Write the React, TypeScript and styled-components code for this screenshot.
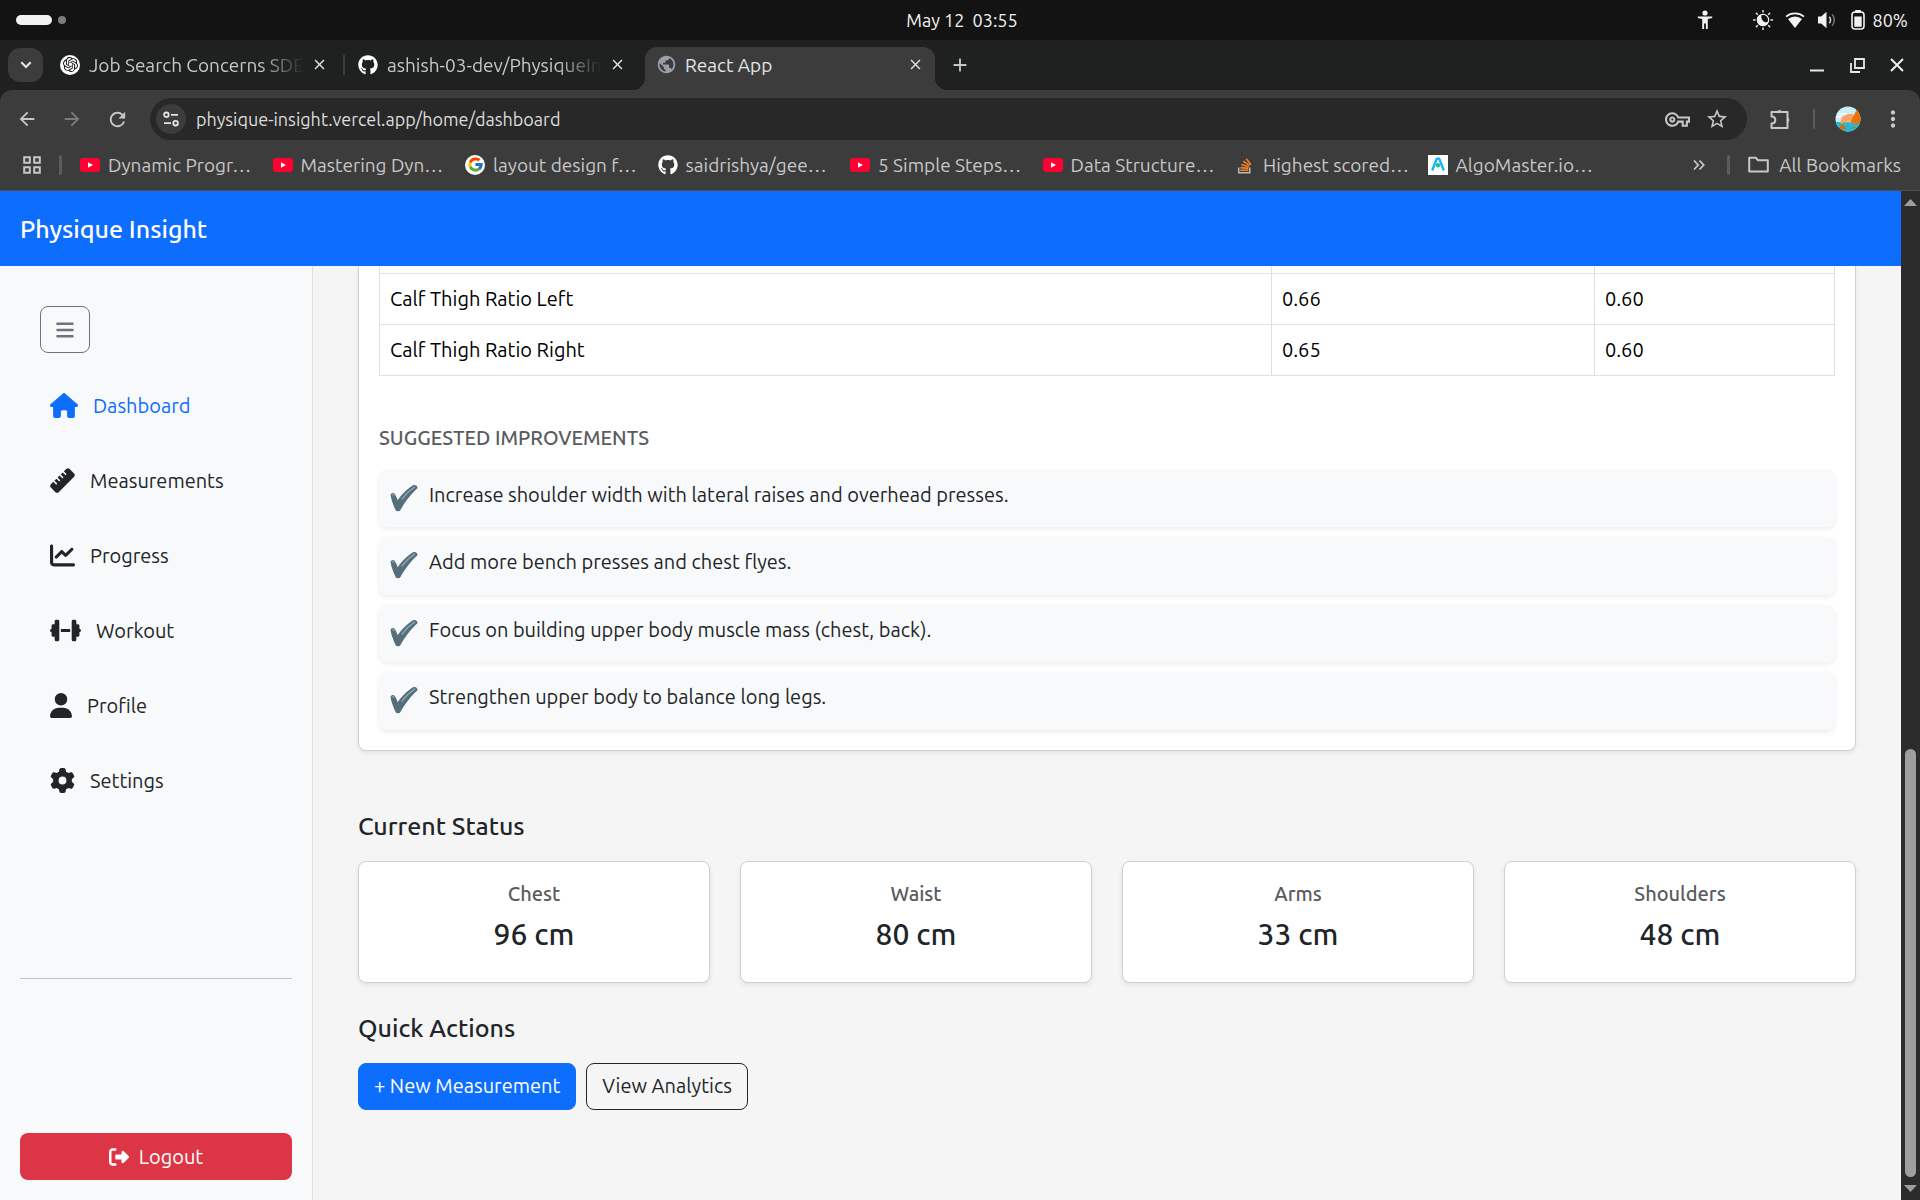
import React from "react";
import styled, { createGlobalStyle, css } from "styled-components";
import {
  FaHouse,
  FaRuler,
  FaChartLine,
  FaDumbbell,
  FaUser,
  FaGear,
  FaRightFromBracket,
  FaBars,
  FaGithub,
} from "react-icons/fa6";
import { FcGoogle } from "react-icons/fc";
import { SiOpenai } from "react-icons/si";
import {
  MdArrowBack,
  MdArrowForward,
  MdRefresh,
  MdStarBorder,
  MdOutlineVpnKey,
  MdMoreVert,
  MdPublic,
  MdClose,
  MdAdd,
} from "react-icons/md";

const GlobalStyle = createGlobalStyle`
  *, *::before, *::after { box-sizing: border-box; }
  body {
    margin: 0;
    background: #f5f5f5;
    color: #212529;
    font-family: Ubuntu, "Open Sans", "Noto Sans", sans-serif;
    font-size: 20px;
    line-height: 30px;
  }
  button, input { font: inherit; margin: 0; }
  h2, h3, p, ul { margin: 0; padding: 0; }
  ul { list-style: none; }
  a { color: inherit; text-decoration: none; }
  svg { display: block; flex: none; }
`;

const Screen = styled.div`
  display: flex;
  flex-direction: column;
  min-height: 100vh;
`;

/* ---------- system bar ---------- */

const SystemBar = styled.header`
  display: grid;
  grid-template-columns: 1fr auto 1fr;
  align-items: center;
  height: 40px;
  padding: 0 12px 0 16px;
  background: #131313;
  color: #f2f2f2;
  font-size: 18px;
`;

const Workspaces = styled.div`
  display: flex;
  align-items: center;
  gap: 6px;
`;

const WorkspaceDot = styled.span<{ $active?: boolean }>`
  width: ${(p) => (p.$active ? 36 : 8)}px;
  height: ${(p) => (p.$active ? 10 : 8)}px;
  border-radius: 5px;
  background: ${(p) => (p.$active ? "#f2f2f2" : "#7e7e7e")};
`;

const Clock = styled.time`
  white-space: pre;
`;

const StatusArea = styled.div`
  display: flex;
  align-items: center;
  justify-content: flex-end;
  gap: 12px;
`;

const AccessSlot = styled.span`
  margin-right: 28px;
`;

const Battery = styled.span`
  display: flex;
  align-items: center;
  gap: 8px;
  margin-left: 2px;
`;

/* ---------- browser chrome ---------- */

const IconButton = styled.button<{ $size?: number; $dim?: boolean }>`
  display: flex;
  align-items: center;
  justify-content: center;
  flex: none;
  width: ${(p) => p.$size ?? 34}px;
  height: ${(p) => p.$size ?? 34}px;
  padding: 0;
  border: 0;
  background: none;
  color: ${(p) => (p.$dim ? "#7c7c7c" : "#c7c7c7")};
`;

const TabStrip = styled.div`
  display: flex;
  align-items: center;
  height: 50px;
  padding: 0 8px;
  background: #1f2120;
`;

const TabSearch = styled(IconButton)`
  width: 35px;
  margin-right: 6px;
  border-radius: 12px;
  background: #3c3c3c;
  color: #e3e3e3;
`;

const Tabs = styled.div`
  display: flex;
  align-self: stretch;
  gap: 8px;
  padding-top: 7px;
`;

const Tab = styled.div<{ $active?: boolean; $divider?: boolean }>`
  position: relative;
  display: flex;
  align-items: center;
  width: 290px;
  padding: 0 10px 8px 11px;
  border-radius: 12px 12px 0 0;
  color: ${(p) => (p.$active ? "#e3e3e3" : "#c7c7c7")};
  ${(p) =>
    p.$divider &&
    css`
      &::after {
        content: "";
        position: absolute;
        right: -6px;
        top: 8px;
        width: 2px;
        height: 20px;
        background: #3c3c3c;
      }
    `}
  ${(p) =>
    p.$active &&
    css`
      background: #3c3c3c;
      &::before,
      &::after {
        content: "";
        position: absolute;
        bottom: 0;
        width: 12px;
        height: 12px;
      }
      &::before {
        left: -12px;
        background: radial-gradient(circle at 0 0, transparent 12px, #3c3c3c 12px);
      }
      &::after {
        right: -12px;
        background: radial-gradient(circle at 100% 0, transparent 12px, #3c3c3c 12px);
      }
    `}
`;

const TabTitle = styled.span<{ $fade?: boolean }>`
  flex: 1;
  margin-left: 9px;
  font-size: 19px;
  white-space: nowrap;
  ${(p) =>
    p.$fade &&
    css`
      mask-image: linear-gradient(90deg, #000 170px, transparent 215px);
    `}
`;

const Favicon = styled.span<{ $bg?: string; $color?: string }>`
  display: flex;
  align-items: center;
  justify-content: center;
  flex: none;
  width: 20px;
  height: 20px;
  border-radius: ${(p) => (p.$bg ? "50%" : "0")};
  background: ${(p) => p.$bg ?? "none"};
  color: ${(p) => p.$color ?? "#fff"};
`;

const NewTab = styled(IconButton)`
  margin-left: 8px;
`;

const WindowControls = styled.div`
  display: flex;
  gap: 6px;
  margin-left: auto;
  margin-right: -2px;
`;

const ToolbarFrame = styled.div`
  background: #1f2120;
`;

const Toolbar = styled.div`
  display: flex;
  align-items: flex-end;
  height: 50px;
  padding: 0 15px 0 10px;
  border-radius: 12px 12px 0 0;
  background: #3c3c3c;
`;

const NavButtons = styled.div`
  display: flex;
  align-items: center;
  gap: 11px;
  height: 42px;
  margin-right: 16px;
`;

const AddressBar = styled.div`
  display: flex;
  align-items: center;
  flex: 1;
  height: 42px;
  padding: 0 10px 0 6px;
  border-radius: 21px;
  background: #282828;
`;

const SiteInfo = styled(IconButton)`
  border-radius: 50%;
  background: #3c3c3c;
  color: #e3e3e3;
`;

const AddressInput = styled.input`
  flex: 1;
  min-width: 0;
  padding: 0 10px;
  border: 0;
  outline: 0;
  background: none;
  color: #dcdcdc;
  font-size: 18px;
`;

const ToolbarEnd = styled.div`
  display: flex;
  align-items: center;
  gap: 16px;
  height: 42px;
  margin-left: 16px;
`;

const Divider = styled.span<{ $w?: number }>`
  flex: none;
  width: ${(p) => p.$w ?? 2}px;
  height: 20px;
  border-radius: 2px;
  background: #5c5c5c;
`;

const BookmarksBar = styled.nav`
  display: flex;
  align-items: center;
  height: 51px;
  padding: 0 19px 1px 15px;
  border-bottom: 1px solid #505050;
  background: #3c3c3c;
  color: #c7c7c7;
  font-size: 19px;
`;

const AppsButton = styled(IconButton)`
  margin-right: 10px;
`;

const Bookmarks = styled.ul`
  display: grid;
  grid-template-columns: repeat(8, 1fr);
  flex: 0 1 1540px;
  margin-left: 18px;
`;

const BookmarkLink = styled.a`
  display: flex;
  align-items: center;
  gap: 8px;
  white-space: nowrap;
`;

const BookmarksEnd = styled.div`
  display: flex;
  align-items: center;
  gap: 18px;
  margin-left: auto;
`;

const AllBookmarks = styled.button`
  display: flex;
  align-items: center;
  gap: 10px;
  padding: 0;
  border: 0;
  background: none;
  color: inherit;
  white-space: nowrap;
`;

/* ---------- page ---------- */

const Viewport = styled.div`
  display: flex;
  flex: 1;
`;

const Page = styled.div`
  display: flex;
  flex-direction: column;
  flex: 1;
  min-width: 0;
`;

const Navbar = styled.header`
  display: flex;
  align-items: center;
  height: 75px;
  padding: 0 20px;
  background: #0d6efd;
`;

const Brand = styled.a`
  color: #fff;
  font-size: 25px;
  font-weight: 500;
`;

const Columns = styled.div`
  display: flex;
  flex: 1;
`;

const Sidebar = styled.aside`
  display: flex;
  flex-direction: column;
  flex: none;
  width: 313px;
  padding: 40px 20px 20px;
  border-right: 1px solid #dee2e6;
  background: #f8f9fa;
`;

const buttonBase = css`
  display: flex;
  align-items: center;
  justify-content: center;
  height: 47px;
  padding: 0 15px;
  border: 1px solid transparent;
  border-radius: 8px;
`;

const MenuButton = styled.button`
  ${buttonBase}
  width: 50px;
  margin-left: 20px;
  border-color: #6c757d;
  background: none;
  color: #6c757d;
`;

const SideNav = styled.ul`
  margin: 15px 0 5px;
`;

const SideLink = styled.a<{ $active?: boolean; $icon: number }>`
  display: flex;
  align-items: center;
  gap: 15px;
  height: 75px;
  padding-left: 30px;
  color: ${(p) => (p.$active ? "#0d6efd" : "#212529")};
  svg {
    width: ${(p) => p.$icon}px;
    height: 25px;
  }
`;

const Rule = styled.hr`
  width: 100%;
  margin: auto 0;
  border: 0;
  border-top: 1px solid #c3c4c5;
`;

const LogoutButton = styled.button`
  ${buttonBase}
  gap: 10px;
  background: #dc3545;
  color: #fff;
`;

const Main = styled.main`
  flex: 1;
  min-width: 0;
  padding: 0 45px;
  overflow: hidden;
`;

const cardBase = css`
  border: 1px solid #d0d0d0;
  background: #fff;
  box-shadow: 0 2px 5px rgba(0, 0, 0, 0.08);
`;

const AnalysisCard = styled.section`
  ${cardBase}
  margin-bottom: 60px;
  padding: 0 20px 20px;
  border-top: 0;
  border-radius: 0 0 8px 8px;
`;

const RatioTable = styled.table`
  width: 100%;
  margin-bottom: 50px;
  border-collapse: collapse;
  table-layout: fixed;
  color: #000;
`;

const Cell = styled.td<{ $w?: string }>`
  width: ${(p) => p.$w ?? "auto"};
  height: 51px;
  padding: 0 10px;
  border: 1px solid #dee2e6;
`;

const CutCell = styled(Cell)`
  height: 7px;
  padding: 0;
  border-top: 0;
`;

const SubTitle = styled.h3`
  margin-bottom: 20px;
  color: #595c5f;
  font-size: 20px;
  font-weight: 500;
  line-height: 24px;
  text-transform: uppercase;
`;

const Tips = styled.ul`
  display: grid;
  grid-auto-rows: 1fr;
  gap: 10px;
  min-height: 260px;
`;

const Tip = styled.li`
  display: flex;
  gap: 10px;
  padding: 10px 11px;
  border-radius: 8px;
  background: #f8f9fa;
  box-shadow: 0 2px 5px rgba(0, 0, 0, 0.08);
  svg {
    margin-top: 4px;
  }
`;

const SectionTitle = styled.h2`
  margin-bottom: 20px;
  font-size: 25px;
  font-weight: 500;
  line-height: 30px;
`;

const StatGrid = styled.div`
  display: grid;
  grid-template-columns: repeat(4, 1fr);
  gap: 30px;
  margin-bottom: 30px;
`;

const StatCard = styled.article`
  ${cardBase}
  padding: 20px 20px 30px;
  border-radius: 8px;
  text-align: center;
`;

const StatName = styled.h3`
  margin-bottom: 10px;
  color: #595c5f;
  font-size: 20px;
  font-weight: 500;
  line-height: 24px;
`;

const StatValue = styled.p`
  font-size: 30px;
  font-weight: 500;
  line-height: 36px;
`;

const Actions = styled.div`
  display: flex;
  gap: 10px;
`;

const ActionButton = styled.button<{ $primary?: boolean }>`
  ${buttonBase}
  border-color: ${(p) => (p.$primary ? "#0d6efd" : "#212529")};
  background: ${(p) => (p.$primary ? "#0d6efd" : "transparent")};
  color: ${(p) => (p.$primary ? "#fff" : "#212529")};
`;

const Scrollbar = styled.div`
  display: flex;
  flex-direction: column;
  align-items: center;
  flex: none;
  width: 19px;
  padding: 8px 0;
  background: #2c2c2c;
`;

const ScrollGap = styled.span`
  flex: 543;
`;

const ScrollThumb = styled.span`
  flex: 428;
  width: 11px;
  margin-bottom: 8px;
  border-radius: 6px;
  background: #9f9f9f;
`;

/* ---------- drawings ---------- */

const PersonIcon = () => (
  <svg width="16" height="20" viewBox="0 0 16 20" fill="#f2f2f2">
    <circle cx="8" cy="3" r="2.6" />
    <path d="M.8 6.4h14.4v1.6L10.800 9V19H8.900v-5.500h-1.800V19H5.200V9L.8 8z" />
  </svg>
);

const NightLightIcon = () => (
  <svg width="20" height="20" viewBox="0 0 20 20">
    <path
      d="M10 0v2.600M10 17.400V20M0 10h2.600M17.400 10H20M2.900 2.900l1.900 1.900M15.200 15.200l1.900 1.900M2.900 17.100l1.900-1.900M15.200 4.800l1.900-1.900"
      stroke="#e0e0e0"
      strokeWidth="1.5"
    />
    <circle cx="10" cy="10" r="5.600" fill="none" stroke="#f2f2f2" strokeWidth="1.200" />
    <path d="M8.500 4.600A5.700 5.700 0 1 0 15.400 11.500c-1.500 1-4 .8-5.400-.6-1.600-1.600-2-4-1.500-6.300z" fill="#f2f2f2" />
    <path d="M9.500 5.600c2.500-.8 5.300 1.200 5.200 4.600-1.600 1-3.500.7-4.500-.4-1-1.200-1.300-2.800-.7-4.200z" fill="#131313" />
  </svg>
);

const WifiIcon = () => (
  <svg width="20" height="17" viewBox="0 0 20 17">
    <path d="M1 4.600a14 14 0 0 1 18 0" fill="none" stroke="#f2f2f2" strokeWidth="1.800" />
    <path d="M3 6.900a11 11 0 0 1 14 0L10 16z" fill="#f2f2f2" />
  </svg>
);

const SoundIcon = () => (
  <svg width="20" height="18" viewBox="0 0 20 18" fill="none">
    <path d="M1 5.500h3.200L9.500.8v16.400L4.200 12.500H1z" fill="#f2f2f2" />
    <path d="M12.200 5.800a4.500 4.500 0 0 1 0 6.400" stroke="#d0d0d0" strokeWidth="1.600" />
    <path d="M15 3.200a8.500 8.500 0 0 1 0 11.600" stroke="#6e6e6e" strokeWidth="1.600" />
  </svg>
);

const BatteryIcon = () => (
  <svg width="14" height="20" viewBox="0 0 14 20">
    <rect x="4" y="0" width="6" height="3" rx="1" fill="#f2f2f2" />
    <rect x="1" y="2" width="12" height="17" rx="3" fill="none" stroke="#f2f2f2" strokeWidth="1.600" />
    <rect x="3.300" y="6.500" width="7.400" height="10.300" fill="#f2f2f2" />
  </svg>
);

const ChevronIcon = () => (
  <svg width="12" height="8" viewBox="0 0 12 8" fill="none" stroke="currentColor" strokeWidth="2.200">
    <path d="M1.300 1.300L6 6l4.700-4.700" />
  </svg>
);

const MinimizeIcon = () => (
  <svg width="14" height="14" viewBox="0 0 14 14">
    <path d="M0 12.500h14" stroke="#e8e8e8" strokeWidth="2" />
  </svg>
);

const RestoreIcon = () => (
  <svg width="15" height="15" viewBox="0 0 15 15" fill="none" stroke="#e8e8e8" strokeWidth="1.800">
    <path d="M5 1h9v9H5zM1 5v9h9" />
  </svg>
);

const CloseWindowIcon = () => (
  <svg width="14" height="14" viewBox="0 0 14 14" stroke="#f2f2f2" strokeWidth="1.900">
    <path d="M1 1l12 12M13 1L1 13" />
  </svg>
);

const TuneIcon = () => (
  <svg width="16" height="16" viewBox="0 0 16 16" fill="none" stroke="currentColor" strokeWidth="1.800">
    <circle cx="3.400" cy="3.800" r="2.300" />
    <path d="M8 3.800h7M1 12.200h7" />
    <circle cx="12.600" cy="12.200" r="2.300" />
  </svg>
);

const PuzzleIcon = () => (
  <svg width="22" height="22" viewBox="0 0 22 22" fill="none" stroke="currentColor" strokeWidth="2" strokeLinejoin="round">
    <path d="M2.500 4h16v16h-16v-4.500c2.700 0 3.800-1.500 3.800-3.500S5.200 8.500 2.500 8.500z" />
    <path d="M8 4a2.600 2.600 0 0 1 5 0zM18.500 9.500a2.600 2.600 0 0 1 0 5z" fill="currentColor" stroke="none" />
  </svg>
);

const Avatar = () => (
  <svg width="26" height="26" viewBox="0 0 26 26">
    <clipPath id="avatar-clip">
      <circle cx="13" cy="13" r="12.500" />
    </clipPath>
    <g clipPath="url(#avatar-clip)">
      <path fill="#c9eef8" d="M0 0h26v26H0z" />
      <path fill="#fff" d="M3 7h9v1.500H3zM1 10h6v1.200H1z" />
      <path fill="#22b8d4" d="M0 16h26v10H0z" />
      <path fill="#ff9e5e" d="M5 17l2-6 6-3 5 0 3 9-3 1-1-3-2 3-2-4-2 4-2-3-1 3z" />
      <path fill="#e8710a" d="M18 11l4-8 4 3v12l-6 0-4-2z" />
      <path fill="#d96a0b" d="M4 22l3-4 4 4-2 2zM17 21h4l-2 2z" />
    </g>
  </svg>
);

const AppsIcon = () => (
  <svg width="20" height="20" viewBox="0 0 20 20" fill="none" stroke="currentColor" strokeWidth="2">
    <path d="M2.200 2.200h5.600v5.600H2.200zM12.200 2.200h5.600v5.600h-5.600zM2.200 12.200h5.600v5.600H2.200zM12.200 12.200h5.600v5.600h-5.600z" />
  </svg>
);

const YouTubeIcon = () => (
  <svg width="20" height="14" viewBox="0 0 20 14">
    <rect width="20" height="14" rx="3" fill="#ff0033" />
    <path d="M8 4.200v5.600l4.900-2.800z" fill="#fff" />
  </svg>
);

const StackIcon = () => (
  <svg width="20" height="20" viewBox="0 0 20 20" fill="none">
    <path d="M3.700 12.500v5.300h11.100v-5.300" stroke="#bcbbbb" strokeWidth="1.500" />
    <path
      d="M5.300 15.300h8M5.500 12.600l7.900.8M6.300 9.600l7.500 2.200M8.200 6.300l6.600 4.100M11.200 3.700l4.800 5.900"
      stroke="#f48024"
      strokeWidth="1.600"
    />
  </svg>
);

const AlgoIcon = () => (
  <svg width="20" height="20" viewBox="0 0 20 20">
    <path fill="#fff" d="M0 0h20v20H0z" />
    <path d="M4.200 15.500L8.800 3.600h2.400l4.600 11.900" fill="none" stroke="#12b5ff" strokeWidth="2.400" strokeLinejoin="round" />
    <circle cx="10" cy="10.300" r="2.200" fill="#12c98b" />
  </svg>
);

const MoreIcon = () => (
  <svg width="12" height="12" viewBox="0 0 12 12" fill="none" stroke="currentColor" strokeWidth="1.800">
    <path d="M1 1.500L5.200 6 1 10.500M6.500 1.500L10.700 6l-4.200 4.500" />
  </svg>
);

const FolderIcon = () => (
  <svg width="21" height="17" viewBox="0 0 21 17" fill="none" stroke="currentColor" strokeWidth="2" strokeLinejoin="round">
    <path d="M1.200 1.800h6.600l2.200 2.400h9.800v11.300H1.200z" />
  </svg>
);

const CheckIcon = () => (
  <svg width="29" height="29" viewBox="0 0 30 30">
    <path
      d="M.6 11.500C.3 9.800 3.300 8.300 4.800 10.200c1.200 1.700 2 4 3.200 6.500C11.500 11.500 17.500 5 23.800 1.300c2-1.200 5.200.5 4.600 2.900-.3 1.100-1.700 1.600-2.800 2.900C20 12.500 15 19.500 10.600 27.200c-.8 1.400-4 1.400-4.800-.2C3.300 21.800 1.400 17 .6 11.500z"
      fill="#546e7a"
    />
    <path d="M12.500 15.500C16 11 20.500 6.500 25.300 3.300" stroke="#8ba3ae" strokeWidth="1.600" strokeLinecap="round" fill="none" />
    <path d="M2.300 11.300c.8-.8 1.600-.3 2 .6" stroke="#8ba3ae" strokeWidth="1.200" strokeLinecap="round" fill="none" />
  </svg>
);

const UpArrow = () => (
  <svg width="13" height="7" viewBox="0 0 13 7">
    <path d="M0 7L6.500 0 13 7z" fill="#9f9f9f" />
  </svg>
);

const DownArrow = () => (
  <svg width="13" height="7" viewBox="0 0 13 7">
    <path d="M0 0l6.500 7L13 0z" fill="#9f9f9f" />
  </svg>
);

/* ---------- data ---------- */

const tabs = [
  { title: "Job Search Concerns SDE", icon: <SiOpenai size={15} />, bg: "#fff", color: "#111", fade: true, divider: true },
  { title: "ashish-03-dev/PhysiqueIn", icon: <FaGithub size={20} />, fade: true },
  { title: "React App", icon: <MdPublic size={21} />, color: "#9aa0a6", active: true },
];

const bookmarks = [
  { label: "Dynamic Progr…", icon: <YouTubeIcon /> },
  { label: "Mastering Dyn…", icon: <YouTubeIcon /> },
  { label: "layout design f…", icon: <FcGoogle size={17} />, bg: "#fff" },
  { label: "saidrishya/gee…", icon: <FaGithub size={20} /> },
  { label: "5 Simple Steps…", icon: <YouTubeIcon /> },
  { label: "Data Structure…", icon: <YouTubeIcon /> },
  { label: "Highest scored…", icon: <StackIcon /> },
  { label: "AlgoMaster.io…", icon: <AlgoIcon /> },
];

const links = [
  { label: "Dashboard", icon: <FaHouse />, width: 28, active: true },
  { label: "Measurements", icon: <FaRuler />, width: 25 },
  { label: "Progress", icon: <FaChartLine />, width: 25 },
  { label: "Workout", icon: <FaDumbbell />, width: 31 },
  { label: "Profile", icon: <FaUser />, width: 22 },
  { label: "Settings", icon: <FaGear />, width: 25 },
];

const ratios = [
  ["Calf Thigh Ratio Left", "0.66", "0.60"],
  ["Calf Thigh Ratio Right", "0.65", "0.60"],
];

const tips = [
  "Increase shoulder width with lateral raises and overhead presses.",
  "Add more bench presses and chest flyes.",
  "Focus on building upper body muscle mass (chest, back).",
  "Strengthen upper body to balance long legs.",
];

const stats = [
  ["Chest", "96 cm"],
  ["Waist", "80 cm"],
  ["Arms", "33 cm"],
  ["Shoulders", "48 cm"],
];

/* ---------- sections ---------- */

const BrowserChrome = () => (
  <>
    <TabStrip>
      <TabSearch aria-label="Search tabs">
        <ChevronIcon />
      </TabSearch>
      <Tabs>
        {tabs.map((t) => (
          <Tab key={t.title} $active={t.active} $divider={t.divider}>
            <Favicon $bg={t.bg} $color={t.color}>
              {t.icon}
            </Favicon>
            <TabTitle $fade={t.fade}>{t.title}</TabTitle>
            <IconButton $size={20} aria-label="Close tab">
              <MdClose size={17} color="#e3e3e3" />
            </IconButton>
          </Tab>
        ))}
      </Tabs>
      <NewTab aria-label="New tab">
        <MdAdd size={22} />
      </NewTab>
      <WindowControls>
        <IconButton aria-label="Minimize">
          <MinimizeIcon />
        </IconButton>
        <IconButton aria-label="Restore">
          <RestoreIcon />
        </IconButton>
        <IconButton aria-label="Close window">
          <CloseWindowIcon />
        </IconButton>
      </WindowControls>
    </TabStrip>
    <ToolbarFrame>
      <Toolbar>
        <NavButtons>
          <IconButton aria-label="Back">
            <MdArrowBack size={22} />
          </IconButton>
          <IconButton $dim aria-label="Forward">
            <MdArrowForward size={22} />
          </IconButton>
          <IconButton aria-label="Reload">
            <MdRefresh size={23} />
          </IconButton>
        </NavButtons>
        <AddressBar>
          <SiteInfo $size={30} aria-label="Site information">
            <TuneIcon />
          </SiteInfo>
          <AddressInput aria-label="Address" defaultValue="physique-insight.vercel.app/home/dashboard" />
          <IconButton $size={40} aria-label="Passwords">
            <MdOutlineVpnKey size={25} />
          </IconButton>
          <IconButton $size={40} aria-label="Bookmark this page">
            <MdStarBorder size={24} />
          </IconButton>
        </AddressBar>
        <ToolbarEnd>
          <IconButton aria-label="Extensions">
            <PuzzleIcon />
          </IconButton>
          <Divider />
          <IconButton aria-label="Profile menu">
            <Avatar />
          </IconButton>
          <IconButton $size={24} aria-label="Browser menu">
            <MdMoreVert size={26} />
          </IconButton>
        </ToolbarEnd>
      </Toolbar>
    </ToolbarFrame>
    <BookmarksBar aria-label="Bookmarks">
      <AppsButton aria-label="Apps">
        <AppsIcon />
      </AppsButton>
      <Divider $w={3} />
      <Bookmarks>
        {bookmarks.map((b) => (
          <li key={b.label}>
            <BookmarkLink href="#">
              <Favicon $bg={b.bg}>{b.icon}</Favicon>
              {b.label}
            </BookmarkLink>
          </li>
        ))}
      </Bookmarks>
      <BookmarksEnd>
        <IconButton $size={20} aria-label="More bookmarks">
          <MoreIcon />
        </IconButton>
        <Divider $w={3} />
        <AllBookmarks>
          <FolderIcon />
          All Bookmarks
        </AllBookmarks>
      </BookmarksEnd>
    </BookmarksBar>
  </>
);

export default function App() {
  return (
    <Screen>
      <GlobalStyle />
      <SystemBar>
        <Workspaces>
          <WorkspaceDot $active />
          <WorkspaceDot />
        </Workspaces>
        <Clock>{"May 12  03:55"}</Clock>
        <StatusArea>
          <AccessSlot>
            <PersonIcon />
          </AccessSlot>
          <NightLightIcon />
          <WifiIcon />
          <SoundIcon />
          <Battery>
            <BatteryIcon />
            80%
          </Battery>
        </StatusArea>
      </SystemBar>
      <BrowserChrome />
      <Viewport>
        <Page>
          <Navbar>
            <Brand href="#">Physique Insight</Brand>
          </Navbar>
          <Columns>
            <Sidebar>
              <MenuButton aria-label="Toggle sidebar">
                <FaBars size={20} />
              </MenuButton>
              <SideNav>
                {links.map((l) => (
                  <li key={l.label}>
                    <SideLink href="#" $active={l.active} $icon={l.width}>
                      {l.icon}
                      {l.label}
                    </SideLink>
                  </li>
                ))}
              </SideNav>
              <Rule />
              <LogoutButton>
                <FaRightFromBracket size={20} />
                Logout
              </LogoutButton>
            </Sidebar>
            <Main>
              <AnalysisCard>
                <RatioTable>
                  <tbody>
                    <tr aria-hidden="true">
                      <CutCell $w="61.3%" />
                      <CutCell $w="22.2%" />
                      <CutCell />
                    </tr>
                    {ratios.map((row) => (
                      <tr key={row[0]}>
                        {row.map((v, i) => (
                          <Cell key={i}>{v}</Cell>
                        ))}
                      </tr>
                    ))}
                  </tbody>
                </RatioTable>
                <SubTitle>Suggested Improvements</SubTitle>
                <Tips>
                  {tips.map((t) => (
                    <Tip key={t}>
                      <CheckIcon />
                      {t}
                    </Tip>
                  ))}
                </Tips>
              </AnalysisCard>
              <SectionTitle>Current Status</SectionTitle>
              <StatGrid>
                {stats.map(([name, value]) => (
                  <StatCard key={name}>
                    <StatName>{name}</StatName>
                    <StatValue>{value}</StatValue>
                  </StatCard>
                ))}
              </StatGrid>
              <SectionTitle>Quick Actions</SectionTitle>
              <Actions>
                <ActionButton $primary>+ New Measurement</ActionButton>
                <ActionButton>View Analytics</ActionButton>
              </Actions>
            </Main>
          </Columns>
        </Page>
        <Scrollbar aria-hidden="true">
          <UpArrow />
          <ScrollGap />
          <ScrollThumb />
          <DownArrow />
        </Scrollbar>
      </Viewport>
    </Screen>
  );
}
